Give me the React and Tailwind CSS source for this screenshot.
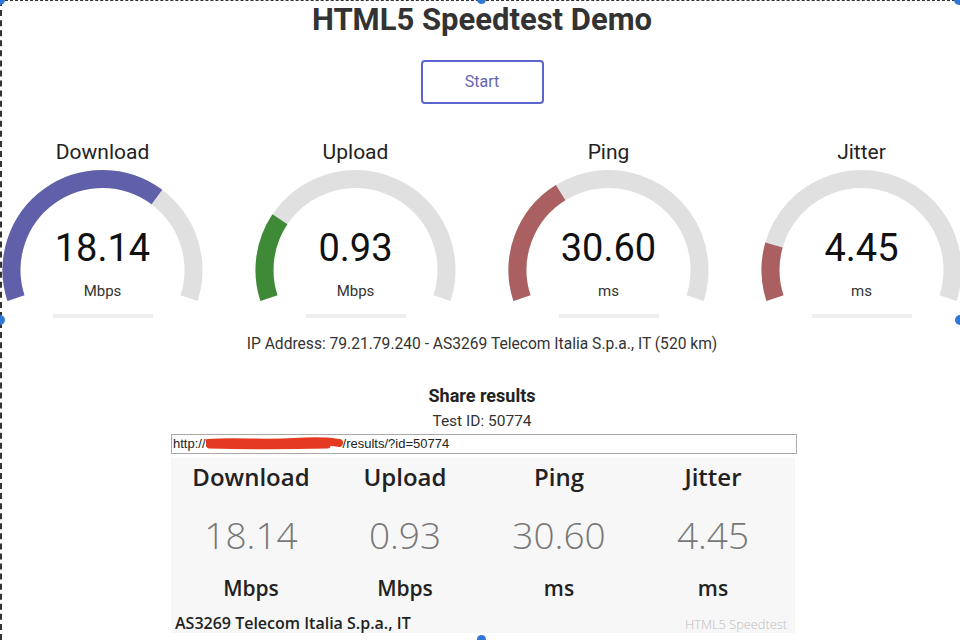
import React from "react";

const R = "Roboto, 'Liberation Sans', sans-serif";
const OS = "'Open Sans', 'Noto Sans', sans-serif";

function arcPath(cx, cy, r, a0, a1) {
  const rad = (d) => (d * Math.PI) / 180;
  const x0 = cx + r * Math.cos(rad(a0));
  const y0 = cy + r * Math.sin(rad(a0));
  const x1 = cx + r * Math.cos(rad(a1));
  const y1 = cy + r * Math.sin(rad(a1));
  const large = a1 - a0 > 180 ? 1 : 0;
  return `M ${x0} ${y0} A ${r} ${r} 0 ${large} 1 ${x1} ${y1}`;
}

function Gauge({ label, value, unit, frac, color }) {
  const cx = 126.5, cy = 106, r = 91;
  const start = -198, total = 216;
  return (
    <div className="w-[253px] shrink-0 flex flex-col items-center">
      <div className="text-[21px] leading-[24px] text-[#222]" style={{ fontFamily: R }}>{label}</div>
      <div className="relative w-[253px] flex flex-col items-center">
        <svg className="absolute top-0 left-0" width="253" height="160" viewBox="0 0 253 160">
          <path d={arcPath(cx, cy, r, start, start + total)} fill="none" stroke="#E0E0E0" strokeWidth="18" />
          <path d={arcPath(cx, cy, r, start, start + total * frac)} fill="none" stroke={color} strokeWidth="18" />
        </svg>
        <div className="relative pt-[62px] text-[38px] leading-[44px] text-[#111]" style={{ fontFamily: R }}>{value}</div>
        <div className="relative mt-[12px] text-[15px] leading-[18px] text-[#333]" style={{ fontFamily: R }}>{unit}</div>
        <div className="relative mt-[14px] w-[100px] h-[4px] bg-[#eeeeee]" />
      </div>
    </div>
  );
}

export default function App() {
  const gauges = [
    { label: "Download", value: "18.14", unit: "Mbps", frac: 0.67, color: "#6060AA" },
    { label: "Upload", value: "0.93", unit: "Mbps", frac: 0.24, color: "#3f8a37" },
    { label: "Ping", value: "30.60", unit: "ms", frac: 0.353, color: "#AA6060" },
    { label: "Jitter", value: "4.45", unit: "ms", frac: 0.157, color: "#AA6060" },
  ];
  const res = [
    { l: "Download", v: "18.14", u: "Mbps" },
    { l: "Upload", v: "0.93", u: "Mbps" },
    { l: "Ping", v: "30.60", u: "ms" },
    { l: "Jitter", v: "4.45", u: "ms" },
  ];
  return (
    <div className="w-[960px] h-[640px] overflow-hidden bg-white relative">
      <div className="w-[964px] flex flex-col items-center">
        <h1 className="pt-[1px] text-[31px] leading-[38px] font-bold text-[#333]" style={{ fontFamily: R }}>
          HTML5 Speedtest Demo
        </h1>
        <button
          className="mt-[21px] w-[123px] h-[44px] border-2 border-[#5a65d0] rounded-[4px] text-[16px] text-[#6565ad] bg-white"
          style={{ fontFamily: R }}
        >
          Start
        </button>
        <div className="mt-[36px] w-full flex justify-center">
          {gauges.map((g) => (
            <Gauge key={g.label} {...g} />
          ))}
        </div>
        <div className="mt-[16px] text-[15.6px] leading-[20px] text-[#333]" style={{ fontFamily: R }}>
          IP Address: 79.21.79.240 - AS3269 Telecom Italia S.p.a., IT (520 km)
        </div>
        <div className="mt-[31px] text-[18px] leading-[22px] font-bold text-[#222]" style={{ fontFamily: R }}>
          Share results
        </div>
        <div className="mt-[5px] text-[15.5px] leading-[18px] text-[#333]" style={{ fontFamily: R }}>
          Test ID: 50774
        </div>
      </div>
      <div
        className="mt-[4px] ml-[171px] w-[626px] h-[20px] border border-[#a9a9a9] flex items-center pl-[1px] text-[13px] text-[#222] whitespace-nowrap"
        style={{ fontFamily: "'Liberation Sans', Arial, sans-serif" }}
      >
        <span>http://</span>
        <svg className="shrink-0" width="137" height="15" viewBox="0 0 137 15">
          <path d="M2 6 C 28 4, 58 7, 88 5 S 126 5, 133 6" fill="none" stroke="#e53a22" strokeWidth="8" strokeLinecap="round" />
          <path d="M3 9 C 40 10, 80 10, 122 9" fill="none" stroke="#e53a22" strokeWidth="5" strokeLinecap="round" />
        </svg>
        <span>/results/?id=50774</span>
      </div>
      <div className="mt-[4px] ml-[171px] w-[624px] h-[175px] bg-[#f7f7f7] flex flex-col" style={{ fontFamily: OS }}>
        <div className="pl-[3px] grid grid-cols-[repeat(4,154px)]">
          {res.map((c) => (
            <div key={c.l} className="flex flex-col items-center">
              <div className="pt-[5px] text-[24px] leading-[28px] font-semibold text-[#222]">{c.l}</div>
              <div className="mt-[22px] text-[37px] leading-[44px] font-light text-[#777]">{c.v}</div>
              <div className="mt-[18px] text-[21px] leading-[26px] font-semibold text-[#222]">{c.u}</div>
            </div>
          ))}
        </div>
        <div className="mt-[13px] pl-[4px] pr-[8px] flex items-baseline justify-between">
          <span className="text-[16px] leading-[18px] font-semibold text-[#222]">AS3269 Telecom Italia S.p.a., IT</span>
          <span className="text-[12.8px] leading-[14px] font-light text-[#bdbdbd]">HTML5 Speedtest</span>
        </div>
      </div>

      <div className="absolute inset-0 pointer-events-none border-t border-l-2 border-dashed border-[#333]" />
      <div className="absolute left-[-5px] top-[-5px] w-[10px] h-[10px] rounded-full bg-[#2f78d4]" />
      <div className="absolute left-[477px] top-[-5px] w-[9px] h-[9px] rounded-full bg-[#2f78d4]" />
      <div className="absolute left-[954px] top-[-5px] w-[10px] h-[10px] rounded-full bg-[#2f78d4]" />
      <div className="absolute left-[-5px] top-[315px] w-[10px] h-[10px] rounded-full bg-[#2f78d4]" />
      <div className="absolute left-[955px] top-[315px] w-[10px] h-[10px] rounded-full bg-[#2f78d4]" />
      <div className="absolute left-[477px] top-[635px] w-[9px] h-[9px] rounded-full bg-[#2f78d4]" />
    </div>
  );
}
